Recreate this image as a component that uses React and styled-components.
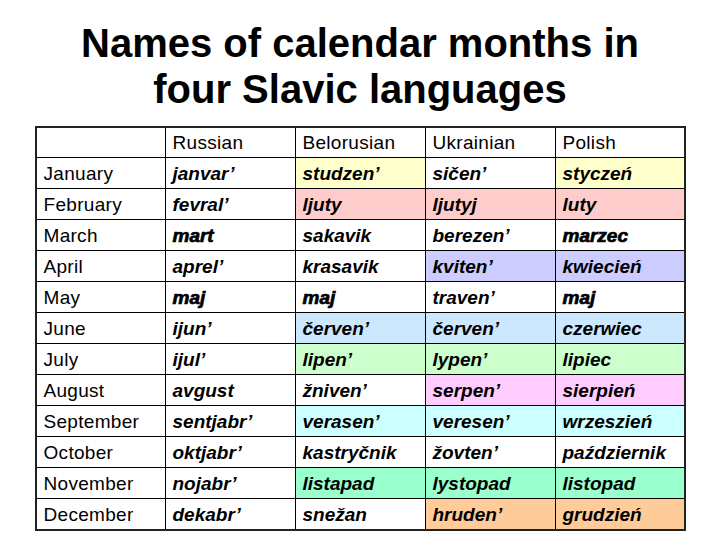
import React from 'react';
import styled, { createGlobalStyle } from 'styled-components';

const GlobalStyle = createGlobalStyle`
  body {
    margin: 0;
    background: #fff;
    font-family: "Liberation Sans", Arial, sans-serif;
  }
`;

const Page = styled.div`
  width: 720px;
  height: 540px;
  overflow: hidden;
  display: flex;
  flex-direction: column;
  align-items: center;
`;

const Title = styled.h1`
  margin: 20px 0 14px;
  font-size: 40px;
  line-height: 46px;
  font-weight: bold;
  text-align: center;
  color: #000;
`;

const Grid = styled.div`
  display: grid;
  grid-template-columns: 128px 130px 130px 130px 129px;
  grid-template-rows: 29px repeat(12, 31px);
  border: 2px solid #222;
`;

const Cell = styled.div`
  display: flex;
  align-items: center;
  padding-left: 7px;
  padding-top: 1px;
  background: ${(p) => p.$bg || '#fff'};
  border-left: ${(p) => (p.$first ? 'none' : '1px solid #000')};
  border-top: ${(p) => (p.$head ? 'none' : '1px solid #000')};
  font-size: 19px;
  letter-spacing: ${(p) => (p.$lang ? '0' : '0.3px')};
  color: #000;
  font-weight: ${(p) => (p.$lang ? 'bold' : 'normal')};
  font-style: ${(p) => (p.$lang ? 'italic' : 'normal')};
  -webkit-text-stroke: ${(p) => (p.$heavy ? '0.7px #000' : '0')};
  white-space: nowrap;
`;

const C = {
  y: '#ffffcc',
  p: '#ffcccc',
  v: '#ccccff',
  b: '#cce8ff',
  g: '#ccffcc',
  m: '#ffccff',
  c: '#ccffff',
  t: '#99ffcc',
  o: '#ffcc99',
};

// each entry: [text, colour key, heavy]
const rows = [
  ['January', ['janvar’'], ['studzen’', 'y'], ['sičen’'], ['styczeń', 'y']],
  ['February', ['fevral’'], ['ljuty', 'p'], ['ljutyj', 'p'], ['luty', 'p']],
  ['March', ['mart', null, true], ['sakavik'], ['berezen’'], ['marzec', null, true]],
  ['April', ['aprel’'], ['krasavik'], ['kviten’', 'v'], ['kwiecień', 'v']],
  ['May', ['maj', null, true], ['maj', null, true], ['traven’'], ['maj', null, true]],
  ['June', ['ijun’'], ['červen’', 'b'], ['červen’', 'b'], ['czerwiec', 'b']],
  ['July', ['ijul’'], ['lipen’', 'g'], ['lypen’', 'g'], ['lipiec', 'g']],
  ['August', ['avgust'], ['žniven’'], ['serpen’', 'm'], ['sierpień', 'm']],
  ['September', ['sentjabr’'], ['verasen’', 'c'], ['veresen’', 'c'], ['wrzeszień', 'c']],
  ['October', ['oktjabr’'], ['kastryčnik'], ['žovten’'], ['październik']],
  ['November', ['nojabr’'], ['listapad', 't'], ['lystopad', 't'], ['listopad', 't']],
  ['December', ['dekabr’'], ['snežan'], ['hruden’', 'o'], ['grudzień', 'o']],
];

const languages = ['Russian', 'Belorusian', 'Ukrainian', 'Polish'];

export default function App() {
  return (
    <Page>
      <GlobalStyle />
      <Title>
        Names of calendar months in
        <br />
        four Slavic languages
      </Title>
      <Grid>
        <Cell $first $head />
        {languages.map((l) => (
          <Cell key={l} $head>{l}</Cell>
        ))}
        {rows.map(([month, ...names]) => (
          <React.Fragment key={month}>
            <Cell $first>{month}</Cell>
            {names.map(([text, bg, heavy], i) => (
              <Cell key={i} $lang $bg={bg && C[bg]} $heavy={heavy}>
                {text}
              </Cell>
            ))}
          </React.Fragment>
        ))}
      </Grid>
    </Page>
  );
}
